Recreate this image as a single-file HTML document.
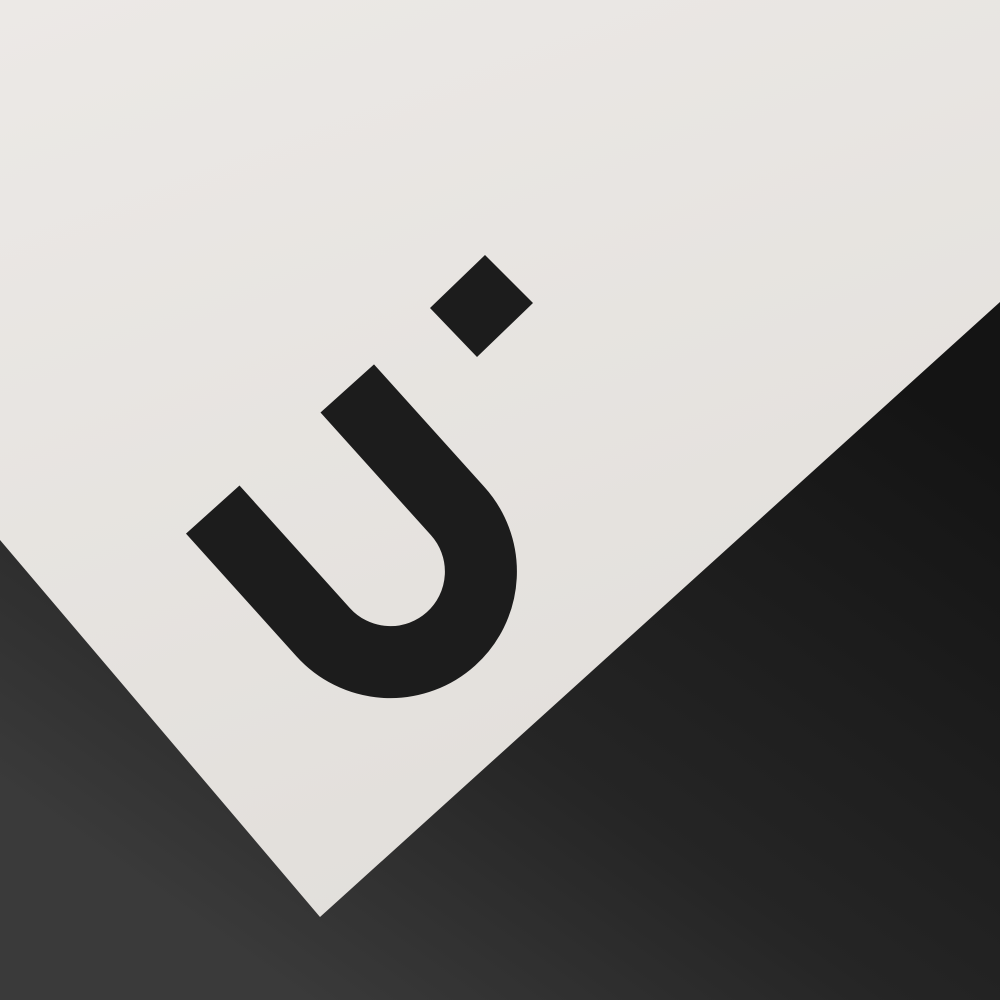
<!DOCTYPE html>
<html><head><style>html,body{margin:0;padding:0;width:1000px;height:1000px;overflow:hidden;background:#2a2a2a}</style></head>
<body>
<svg width="1000" height="1000" viewBox="0 0 1000 1000" xmlns="http://www.w3.org/2000/svg">
<defs>
<linearGradient id="bg" x1="0.8" y1="0.3" x2="0.3" y2="1">
<stop offset="0" stop-color="#141414"/><stop offset="0.6" stop-color="#252525"/><stop offset="1" stop-color="#3a3a3a"/>
</linearGradient>
<linearGradient id="pp" x1="0" y1="0" x2="0.4" y2="1">
<stop offset="0" stop-color="#ece9e6"/><stop offset="1" stop-color="#e2dfdb"/>
</linearGradient>
</defs>
<rect width="1000" height="1000" fill="url(#bg)"/>
<polygon points="0,0 1000,0 1000,302 320,917 0,540" fill="url(#pp)"/>
<g transform="translate(280,449) rotate(-42)">
<path d="M-90.5 0 V165 A90.5 90.5 0 0 0 90.5 165 V0" fill="none" stroke="#1c1c1c" stroke-width="72"/>
</g>
<polygon points="430,308 485,255 533,303 477,357" fill="#1c1c1c"/>
</svg>
</body></html>
